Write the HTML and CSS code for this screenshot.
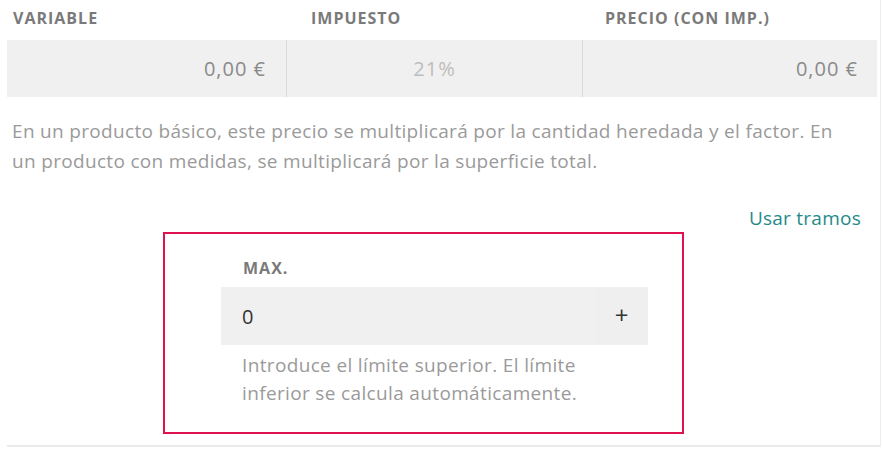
FILE: index.html
```html
<!DOCTYPE html>
<html lang="es">
<head>
<meta charset="utf-8">
<link rel="stylesheet" href="styles.css">
</head>
<body>
<div class="panel">
  <div class="heads">
    <div class="head h1">VARIABLE</div>
    <div class="head h2">IMPUESTO</div>
    <div class="head h3">PRECIO (CON IMP.)</div>
  </div>
  <div class="fields">
    <div class="field f1">0,00 €</div>
    <div class="field f2">21%</div>
    <div class="field f3">0,00 €</div>
  </div>
  <p class="note">En un producto básico, este precio se multiplicará por la cantidad heredada y el factor. En un producto con medidas, se multiplicará por la superficie total.</p>
  <div class="link-row"><a class="link">Usar tramos</a></div>
  <div class="tier">
    <div class="tier-label">MAX.</div>
    <div class="tier-input">
      <span class="tier-value">0</span>
      <span class="tier-plus">+</span>
    </div>
    <p class="tier-help">Introduce el límite superior. El límite inferior se calcula automáticamente.</p>
  </div>
</div>
</body>
</html>
```
FILE: styles.css
```css
html, body {
  margin: 0;
  padding: 0;
  background: #fff;
  font-family: "Open Sans", "DejaVu Sans", sans-serif;
}
.panel {
  margin-left: 7px;
  width: 870px;
  padding-right: 3px;
  border-right: 1px solid #eeeeee;
  border-bottom: 2px solid #ebebeb;
  height: 445px;
}
.heads {
  display: flex;
  height: 40px;
}
.head {
  font-size: 16px;
  font-weight: 700;
  letter-spacing: 1px;
  color: #7a7a7a;
  line-height: 36px;
  box-sizing: border-box;
}
.h1 { width: 279px; padding-left: 6px; }
.h2 { width: 296px; padding-left: 25px; }
.h3 { flex: 1; padding-left: 23px; }
.fields {
  display: flex;
  height: 57px;
  background: #f0f0f0;
}
.field {
  font-size: 20px;
  letter-spacing: 1px;
  color: #8a8a8a;
  line-height: 57px;
  box-sizing: border-box;
}
.f1 { width: 280px; text-align: right; padding-right: 20px; border-right: 1px solid #d9d9d9; }
.f2 { width: 296px; text-align: center; color: #bdbdbd; border-right: 1px solid #d9d9d9; }
.f3 { flex: 1; text-align: right; padding-right: 19px; }
.note {
  margin: 19px 0 0 5px;
  width: 840px;
  font-size: 19px;
  letter-spacing: 0.32px;
  line-height: 30px;
  color: #9a9a9a;
}
.link-row {
  display: flex;
  justify-content: flex-end;
  padding-right: 16px;
  margin-top: 27px;
  height: 30px;
}
.link {
  font-size: 19px;
  letter-spacing: 0.25px;
  color: #1f8a8a;
  line-height: 30px;
}
.tier {
  margin-left: 156px;
  margin-top: -1px;
  width: 521px;
  height: 202px;
  box-sizing: border-box;
  border: 2px solid #e0114f;
  padding: 22px 0 0 56px;
}
.tier-label {
  font-size: 16px;
  font-weight: 700;
  letter-spacing: 1px;
  color: #7a7a7a;
  line-height: 24px;
  padding-left: 22px;
  margin-bottom: 7px;
}
.tier-input {
  display: flex;
  align-items: center;
  width: 427px;
  height: 58px;
  background: #f0f0f0;
}
.tier-value {
  flex: 1;
  padding-left: 21px;
  font-size: 20px;
  color: #333;
}
.tier-plus {
  width: 53px;
  height: 58px;
  line-height: 56px;
  text-align: center;
  font-size: 24px;
  color: #333;
  background: #efefef;
}
.tier-help {
  margin: 6px 0 0 21px;
  width: 380px;
  font-size: 19px;
  letter-spacing: 0.35px;
  line-height: 28px;
  color: #9a9a9a;
}
```
